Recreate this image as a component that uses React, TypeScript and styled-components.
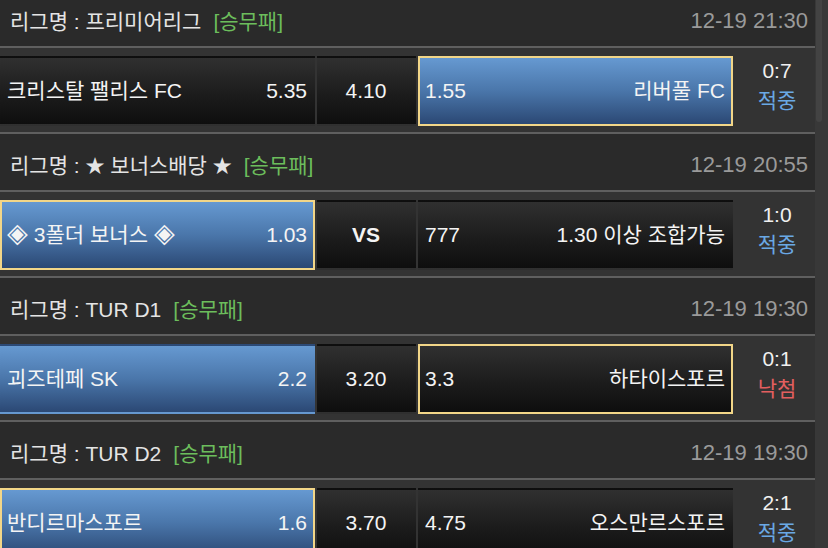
import React from 'react';
import styled, { createGlobalStyle } from 'styled-components';

const Global = createGlobalStyle`
  html, body { margin: 0; padding: 0; background: #2a2a2a; }
  body { font-family: "Liberation Sans", "Noto Sans CJK KR", sans-serif; -webkit-font-smoothing: antialiased; }
`;

const Screen = styled.div`
  width: 828px;
  height: 548px;
  display: flex;
  overflow: hidden;
  background: #2a2a2a;
`;

const List = styled.div`
  flex: 0 0 815px;
  margin-top: -10px;
  display: flex;
  flex-direction: column;
`;

const ScrollTrack = styled.div`
  flex: 1;
  background: #383838;
  padding-left: 1px;
`;

const ScrollThumb = styled.div`
  width: 6px;
  height: 122px;
  background: #434343;
  border-radius: 0 0 3px 3px;
`;

const LeagueHeader = styled.div`
  height: 58px;
  box-sizing: border-box;
  padding: 6px 7px 0 10px;
  display: flex;
  align-items: center;
  justify-content: space-between;
  background: #2a2a2a;
  border-bottom: 2px solid #5f5f5f;
  font-size: 21px;
  line-height: 1;
  flex-shrink: 0;
`;

const LeagueName = styled.div`
  color: #e4e4e4;
  white-space: nowrap;
`;

const Star = styled.span`
  font-size: 19px;
`;

const BetType = styled.span`
  color: #6cbd5c;
  margin-left: 12px;
`;

const Time = styled.div`
  color: #9a9a9a;
  font-size: 22px;
`;

const MatchRow = styled.div`
  height: 86px;
  box-sizing: border-box;
  padding: 8px 0 6px;
  background: #333333;
  border-bottom: 2px solid #5f5f5f;
  display: grid;
  grid-template-columns: 315px 99px 315px 1fr;
  column-gap: 2px;
  flex-shrink: 0;
`;

const OddsCell = styled.div<{ $win?: boolean; $picked?: boolean; $center?: boolean }>`
  box-sizing: border-box;
  display: flex;
  align-items: center;
  justify-content: ${p => (p.$center ? 'center' : 'space-between')};
  padding: 0 6px 2px 5px;
  border: 2px solid ${p => (p.$picked ? '#f2d688' : 'transparent')};
  background: ${p =>
    p.$win
      ? 'linear-gradient(180deg, #6699d1 0%, #4a76aa 50%, #2b4874 100%)'
      : 'linear-gradient(180deg, #303030 0%, #1c1c1c 55%, #0e0e0e 100%)'};
  color: #f4f4f4;
  font-size: 21px;
  line-height: 1;
  white-space: nowrap;
`;

const Diamond = styled.span`
  font-size: 27px;
  line-height: 0;
`;

const VsText = styled.span`
  font-weight: bold;
  font-size: 21px;
`;

const ScoreBox = styled.div`
  display: flex;
  flex-direction: column;
  align-items: center;
  justify-content: center;
  padding: 0 0 10px 4px;
  font-size: 21px;
  line-height: 30px;
`;

const Score = styled.div`
  color: #f0f0f0;
`;

const Result = styled.div<{ $hit: boolean }>`
  color: ${p => (p.$hit ? '#6aa8e4' : '#e35f5f')};
`;

type Side = { label: React.ReactNode; odds: string };
type Match = {
  league: React.ReactNode;
  time: string;
  home: Side;
  draw: string;
  away: Side;
  winner: 'home' | 'away';
  pick: 'home' | 'away';
  score: string;
  hit: boolean;
};

const matches: Match[] = [
  {
    league: '리그명 : 프리미어리그',
    time: '12-19 21:30',
    home: { label: '크리스탈 팰리스 FC', odds: '5.35' },
    draw: '4.10',
    away: { label: '리버풀 FC', odds: '1.55' },
    winner: 'away',
    pick: 'away',
    score: '0:7',
    hit: true,
  },
  {
    league: (
      <>
        리그명 : <Star>★</Star> 보너스배당 <Star>★</Star>
      </>
    ),
    time: '12-19 20:55',
    home: {
      label: (
        <>
          <Diamond>◈</Diamond> 3폴더 보너스 <Diamond>◈</Diamond>
        </>
      ),
      odds: '1.03',
    },
    draw: 'VS',
    away: { label: '1.30 이상 조합가능', odds: '777' },
    winner: 'home',
    pick: 'home',
    score: '1:0',
    hit: true,
  },
  {
    league: '리그명 : TUR D1',
    time: '12-19 19:30',
    home: { label: '괴즈테페 SK', odds: '2.2' },
    draw: '3.20',
    away: { label: '하타이스포르', odds: '3.3' },
    winner: 'home',
    pick: 'away',
    score: '0:1',
    hit: false,
  },
  {
    league: '리그명 : TUR D2',
    time: '12-19 19:30',
    home: { label: '반디르마스포르', odds: '1.6' },
    draw: '3.70',
    away: { label: '오스만르스포르', odds: '4.75' },
    winner: 'home',
    pick: 'home',
    score: '2:1',
    hit: true,
  },
];

export default function App() {
  return (
    <>
      <Global />
      <Screen>
        <List>
          {matches.map((m, i) => (
            <React.Fragment key={i}>
              <LeagueHeader>
                <LeagueName>
                  {m.league}
                  <BetType>[승무패]</BetType>
                </LeagueName>
                <Time>{m.time}</Time>
              </LeagueHeader>
              <MatchRow>
                <OddsCell $win={m.winner === 'home'} $picked={m.pick === 'home'}>
                  <span>{m.home.label}</span>
                  <span>{m.home.odds}</span>
                </OddsCell>
                <OddsCell $center>
                  {m.draw === 'VS' ? <VsText>VS</VsText> : <span>{m.draw}</span>}
                </OddsCell>
                <OddsCell $win={m.winner === 'away'} $picked={m.pick === 'away'}>
                  <span>{m.away.odds}</span>
                  <span>{m.away.label}</span>
                </OddsCell>
                <ScoreBox>
                  <Score>{m.score}</Score>
                  <Result $hit={m.hit}>{m.hit ? '적중' : '낙첨'}</Result>
                </ScoreBox>
              </MatchRow>
            </React.Fragment>
          ))}
        </List>
        <ScrollTrack>
          <ScrollThumb />
        </ScrollTrack>
      </Screen>
    </>
  );
}
